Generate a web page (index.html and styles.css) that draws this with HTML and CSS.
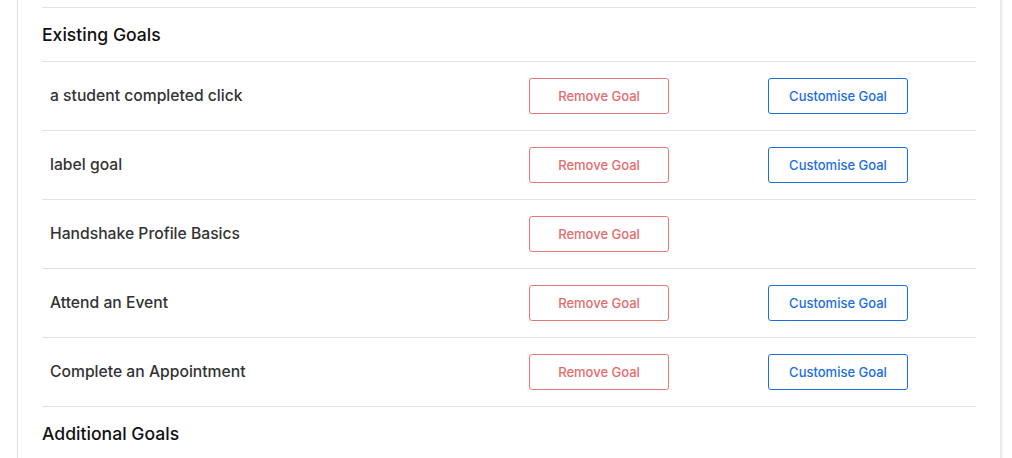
FILE: index.html
```html
<!DOCTYPE html>
<html>
<head>
<meta charset="utf-8">
<link rel="stylesheet" href="styles.css">
</head>
<body>
<div class="card">
  <div class="inner">
    <div class="section-head">Existing Goals</div>
    <div class="row">
      <div class="label">a student completed click</div>
      <div class="cell"><button class="btn remove">Remove Goal</button></div>
      <div class="cell"><button class="btn customise">Customise Goal</button></div>
    </div>
    <div class="row">
      <div class="label">label goal</div>
      <div class="cell"><button class="btn remove">Remove Goal</button></div>
      <div class="cell"><button class="btn customise">Customise Goal</button></div>
    </div>
    <div class="row">
      <div class="label">Handshake Profile Basics</div>
      <div class="cell"><button class="btn remove">Remove Goal</button></div>
      <div class="cell"></div>
    </div>
    <div class="row">
      <div class="label">Attend an Event</div>
      <div class="cell"><button class="btn remove">Remove Goal</button></div>
      <div class="cell"><button class="btn customise">Customise Goal</button></div>
    </div>
    <div class="row">
      <div class="label">Complete an Appointment</div>
      <div class="cell"><button class="btn remove">Remove Goal</button></div>
      <div class="cell"><button class="btn customise">Customise Goal</button></div>
    </div>
    <div class="section-head">Additional Goals</div>
  </div>
</div>
</body>
</html>
```
FILE: styles.css
```css
html, body {
  margin: 0;
  padding: 0;
  background: #ffffff;
  font-family: Inter, "Noto Sans", sans-serif;
  overflow: hidden;
}
.card {
  margin-left: 17px;
  width: 984px;
  height: 470px;
  background: #fff;
  border-left: 1px solid #e3e3e3;
  border-right: 1px solid #e6e6e6;
  box-shadow: 1px 0 3px rgba(0,0,0,0.10);
  box-sizing: border-box;
  padding: 7px 24px 0 24px;
}
.inner {
  border-top: 1px solid #e1e1e1;
}
.section-head {
  height: 53px;
  display: flex;
  align-items: center;
  font-size: 17.6px;
  font-weight: 500;
  color: #111;
  border-bottom: 1px solid #e1e1e1;
}
.section-head:last-child {
  border-bottom: none;
}
.row {
  height: 68px;
  display: grid;
  grid-template-columns: 487px 239px 1fr;
  align-items: center;
  border-bottom: 1px solid #e1e1e1;
}
.label {
  padding-left: 8px;
  padding-bottom: 1px;
  font-size: 15.7px;
  font-weight: 500;
  color: #333;
}
.cell {
  display: flex;
  align-items: center;
}
.btn {
  width: 140px;
  height: 36px;
  border-radius: 3px;
  background: #fff;
  font-family: Inter, "Noto Sans", sans-serif;
  font-size: 13px;
  font-weight: 500;
  padding: 0;
  cursor: pointer;
}
.remove {
  border: 1px solid #e87878;
  color: #e36d6d;
}
.customise {
  border: 1px solid #1a6ee0;
  color: #1a6ee0;
}
```
